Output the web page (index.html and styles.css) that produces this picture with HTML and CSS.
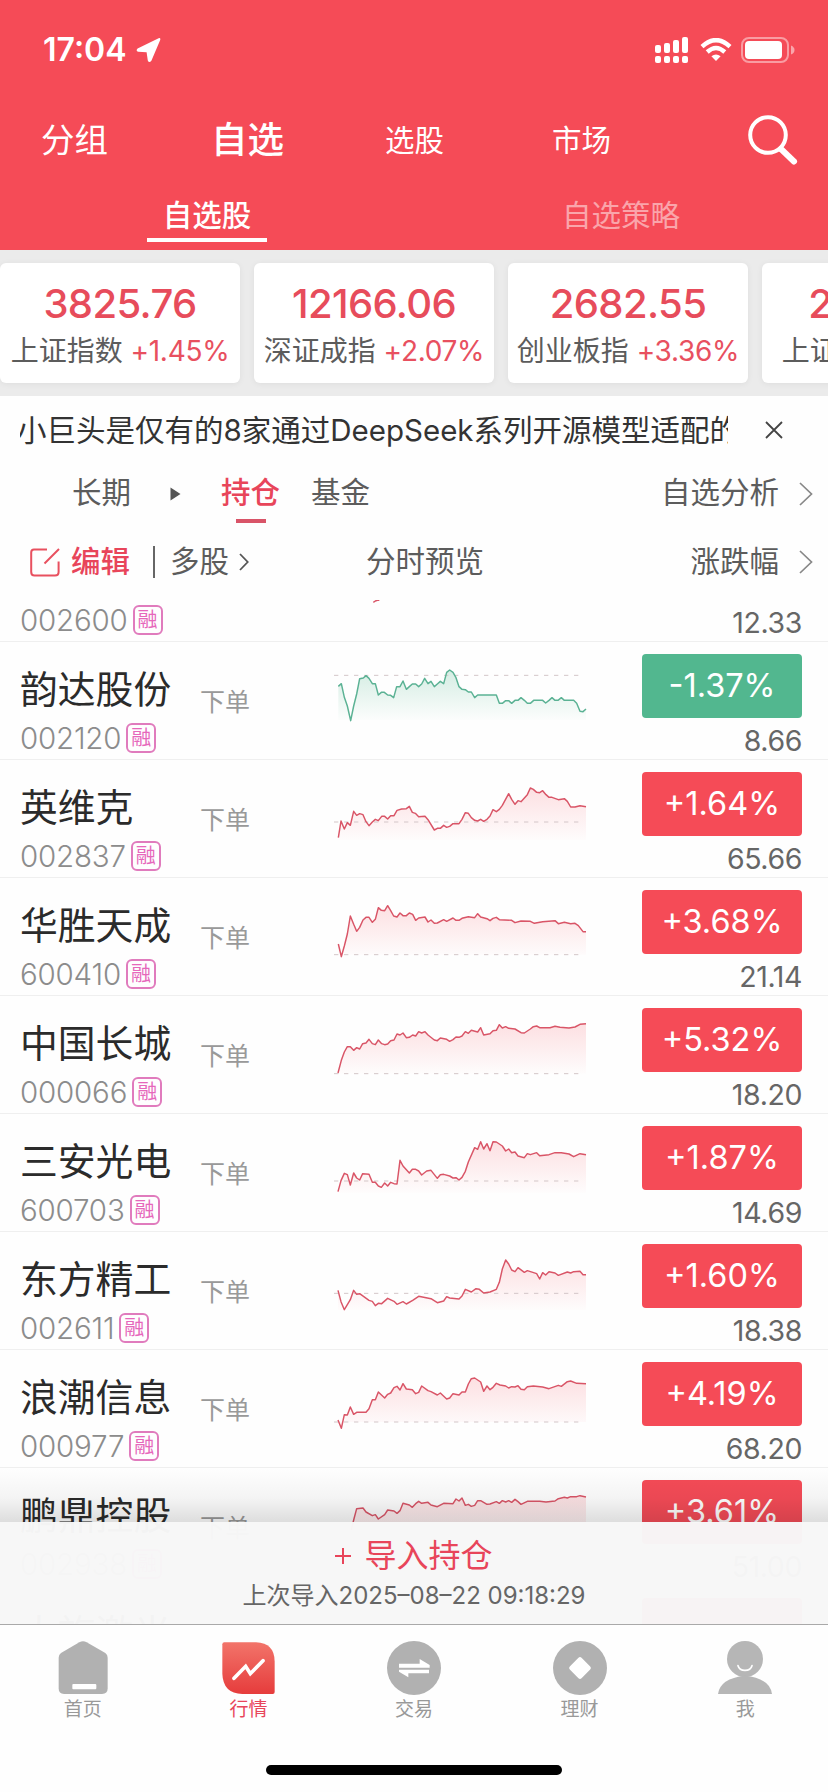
FILE: index.html
```html
<!DOCTYPE html>
<html lang="zh-CN">
<head>
    <meta charset="UTF-8">
    <title>自选股</title>
    <link rel="stylesheet" href="styles.css">
</head>
<body>
    <svg class="defs" width="0" height="0">
        <defs>
            <linearGradient id="upFill" x1="0" y1="0" x2="0" y2="1">
                <stop offset="0" stop-color="#f54b57" stop-opacity="0.17"/>
                <stop offset="1" stop-color="#f54b57" stop-opacity="0.01"/>
            </linearGradient>
            <linearGradient id="downFill" x1="0" y1="0" x2="0" y2="1">
                <stop offset="0" stop-color="#52b78f" stop-opacity="0.24"/>
                <stop offset="1" stop-color="#52b78f" stop-opacity="0.01"/>
            </linearGradient>
            <linearGradient id="tabFill" x1="0" y1="0" x2="0" y2="1">
                <stop offset="0" stop-color="#f2746a"/>
                <stop offset="1" stop-color="#e63c3c"/>
            </linearGradient>
        </defs>
    </svg>

    <header class="header">
        <div class="status-bar">
            <span class="time">17:04</span>
            <svg class="location" width="25" height="26" viewBox="0 0 25 26"><path d="M22.6 1.2 L1.6 11.4 Q-0.6 13.6 2.2 14.8 L10.6 15.2 L11.8 23.4 Q13 26.6 15.4 23.8 L24.2 3 Q24.8 0.4 22.6 1.2 Z" fill="#fff"/></svg>
            <svg class="signal" width="34" height="27" viewBox="0 0 34 27" fill="#fff">
                <rect x="0" y="8" width="6" height="8" rx="2"/><rect x="9" y="6" width="6" height="10" rx="2"/><rect x="18" y="3" width="6" height="13" rx="2"/><rect x="27" y="0" width="6" height="16" rx="2"/>
                <rect x="0" y="19" width="6" height="7" rx="2"/><rect x="9" y="19" width="6" height="7" rx="2"/><rect x="18" y="19" width="6" height="7" rx="2"/><rect x="27" y="19" width="6" height="7" rx="2"/>
            </svg>
            <svg class="wifi" width="32" height="24" viewBox="0 0 32 24" fill="none" stroke="#fff" stroke-width="4.4">
                <path d="M2 8.6 Q16 -4.4 30 8.6"/>
                <path d="M7.2 14 Q16 6 24.8 14"/>
                <path d="M16 23 L11.4 18.2 Q16 14.6 20.6 18.2 Z" fill="#fff" stroke="none"/>
            </svg>
            <svg class="battery" width="54" height="26" viewBox="0 0 54 26">
                <rect x="1" y="1" width="46" height="24" rx="7" fill="none" stroke="#fff" stroke-opacity="0.45" stroke-width="2"/>
                <rect x="4" y="4" width="37" height="18" rx="4" fill="#fff"/>
                <path d="M50 8.5 Q53.5 10 53.5 13 Q53.5 16 50 17.5 Z" fill="#fff" fill-opacity="0.5"/>
            </svg>
        </div>
        <nav class="main-nav">
            <span class="nav-group">分组</span>
            <span class="nav-active">自选</span>
            <span class="nav-pick">选股</span>
            <span class="nav-market">市场</span>
            <svg class="search" width="50" height="50" viewBox="0 0 50 50" fill="none" stroke="#fff" stroke-linecap="round">
                <circle cx="20" cy="20" r="17.8" stroke-width="4"/>
                <path d="M33 34 L46 46.5" stroke-width="6"/>
            </svg>
        </nav>
        <div class="sub-nav">
            <span class="sub-tab sub-active">自选股</span>
            <span class="sub-tab">自选策略</span>
        </div>
    </header>

    <section class="indexes">
        <div class="index-card">
            <div class="index-value">3825.76</div>
            <div class="index-label">上证指数 <span>+1.45%</span></div>
        </div>
        <div class="index-card">
            <div class="index-value">12166.06</div>
            <div class="index-label">深证成指 <span>+2.07%</span></div>
        </div>
        <div class="index-card">
            <div class="index-value">2682.55</div>
            <div class="index-label">创业板指 <span>+3.36%</span></div>
        </div>
        <div class="index-card">
            <div class="index-value">2928.61</div>
            <div class="index-label">上证50 <span>+2.32%</span></div>
        </div>
    </section>

    <section class="news">
        <div class="news-clip"><span class="news-text">小巨头是仅有的8家通过DeepSeek系列开源模型适配的</span></div>
        <svg width="18" height="18" viewBox="0 0 18 18" stroke="#444" stroke-width="1.8"><path d="M1 1 L17 17 M17 1 L1 17"/></svg>
    </section>

    <section class="groups">
        <span class="group-long">长期</span>
        <svg class="triangle" width="11" height="14" viewBox="0 0 11 14"><path d="M0.5 0.5 L10.5 7 L0.5 13.5 Z" fill="#555"/></svg>
        <span class="group-active">持仓</span>
        <span class="group-fund">基金</span>
        <span class="group-analysis">自选分析</span>
        <svg class="chevron" width="14" height="24" viewBox="0 0 14 24" fill="none" stroke="#888" stroke-width="1.7"><path d="M1 1 L12.5 12 L1 23"/></svg>
    </section>

    <section class="columns">
        <svg class="edit-icon" width="30" height="29" viewBox="0 0 30 29" fill="none" stroke="#e8505f" stroke-width="2">
            <path d="M17 1.5 H4 Q1.2 1.5 1.2 4.5 V24 Q1.2 27.5 4.5 27.5 H25 Q28.6 27.5 28.6 24 V13.5"/>
            <path d="M14.5 15.5 L29 1"/>
        </svg>
        <span class="edit">编辑</span>
        <i class="divider"></i>
        <span class="multi">多股</span>
        <svg class="chevron-small" width="10" height="18" viewBox="0 0 10 18" fill="none" stroke="#555" stroke-width="1.8"><path d="M1 1 L8.7 9 L1 17"/></svg>
        <span class="preview">分时预览</span>
        <span class="change">涨跌幅</span>
        <svg class="chevron" width="14" height="24" viewBox="0 0 14 24" fill="none" stroke="#888" stroke-width="1.7"><path d="M1 1 L12.5 12 L1 23"/></svg>
    </section>

    <main class="list">
        <div class="rows">
            <div class="row">
                <div class="stock">
                    <div class="name">领益智造</div>
                    <div class="code">002600<span class="tag">融</span></div>
                </div>
                <div class="order">下单</div>
                <svg class="spark" viewBox="0 0 840 354"><path class="line up" d="M160 235 L166 231 L172 229 L178 229"/></svg>
                <div class="quote">
                    <div class="pct up">+2.15%</div>
                    <div class="price">12.33</div>
                </div>
            </div>

            <div class="row">
                <div class="stock">
                    <div class="name">韵达股份</div>
                    <div class="code">002120<span class="tag">融</span></div>
                </div>
                <div class="order">下单</div>
                <svg class="spark" viewBox="0 6 840 354">
                    <path class="base" d="M42 106 H776"/>
                    <path class="line down" data-floor="240" d="M55 139 L64 131 L73 172 L82 198 L92 242 L101 198 L110 162 L119 116 L130 114 L138 107 L147 115 L157 131 L166 131 L175 165 L184 157 L193 157 L203 165 L212 166 L221 173 L230 140 L240 140 L249 123 L259 148 L268 140 L277 132 L287 132 L296 140 L305 132 L314 115 L324 131 L333 124 L343 140 L352 132 L361 124 L371 131 L380 97 L389 90 L399 97 L408 113 L417 140 L426 148 L436 149 L445 156 L454 156 L464 173 L473 165 H529 L538 190 L547 190 L557 182 L566 182 L575 190 L585 181 L594 181 L603 173 L613 181 L622 190 L631 190 L641 181 H668 L677 189 L687 181 L696 173 L705 181 L714 181 L724 173 L733 181 H761 L770 190 L780 214 L789 215 L798 207"/>
                </svg>
                <div class="quote">
                    <div class="pct down">-1.37%</div>
                    <div class="price">8.66</div>
                </div>
            </div>

            <div class="row">
                <div class="stock">
                    <div class="name">英维克</div>
                    <div class="code">002837<span class="tag">融</span></div>
                </div>
                <div class="order">下单</div>
                <svg class="spark" viewBox="0 360 840 354">
                    <path class="base" d="M42 546 H776"/>
                    <path class="line up" data-floor="600" d="M55 593 L63 543 L73 567 L82 548 L91 556 L101 514 L110 526 L119 521 L129 524 L138 545 L147 557 L157 546 L166 538 L175 542 L185 529 L194 529 L203 537 L212 527 L222 527 L231 511 L245 507 L259 506 L268 499 L277 517 L286 520 L296 530 L315 529 L324 539 L343 570 L352 565 L361 565 L371 556 L380 562 L389 559 L399 551 L417 551 L426 538 L436 518 L445 520 L454 533 L464 541 L473 543 L482 538 L491 544 L501 538 L510 528 L519 509 L529 515 L538 508 L547 496 L566 461 L575 478 L585 493 L594 482 L603 485 L622 464 L631 444 L640 448 L650 457 L659 458 L668 452 L678 464 L687 472 L696 472 L715 479 L733 476 L742 484 L752 501 L765 501 L780 497 L798 500"/>
                </svg>
                <div class="quote">
                    <div class="pct up">+1.64%</div>
                    <div class="price">65.66</div>
                </div>
            </div>

            <div class="row">
                <div class="stock">
                    <div class="name">华胜天成</div>
                    <div class="code">600410<span class="tag">融</span></div>
                </div>
                <div class="order">下单</div>
                <svg class="spark" viewBox="0 24 840 354">
                    <path class="base" d="M42 254 H776"/>
                    <path class="line up" data-floor="254" d="M55 222 L64 260 L73 228 L82 192 L91 138 L101 163 L110 184 L119 172 L129 150 L138 142 L147 142 L157 157 L166 148 L175 113 L184 121 L194 122 L203 107 L212 122 L221 138 L231 141 L240 129 L249 137 L259 137 L268 129 L278 133 L287 151 L296 144 L315 141 L324 156 L333 150 L343 160 L352 159 L371 149 L380 154 L399 144 L408 151 L417 151 L426 145 L445 140 L464 143 L473 131 L482 141 L501 146 L510 152 L519 145 L529 142 L538 149 L575 151 L585 158 L603 153 L631 154 L643 160 L668 155 L705 152 L715 161 L733 157 L752 161 L765 160 L775 167 L789 185 L798 185"/>
                </svg>
                <div class="quote">
                    <div class="pct up">+3.68%</div>
                    <div class="price">21.14</div>
                </div>
            </div>

            <div class="row">
                <div class="stock">
                    <div class="name">中国长城</div>
                    <div class="code">000066<span class="tag">融</span></div>
                </div>
                <div class="order">下单</div>
                <svg class="spark" viewBox="0 378 840 354">
                    <path class="base" d="M42 611 H776"/>
                    <path class="line up" data-floor="611" d="M54 609 L64 571 L73 546 L82 530 L91 530 L101 541 L110 533 L119 537 L128 521 L138 519 L147 508 L157 521 L166 524 L175 510 L185 521 L194 524 L203 522 L212 512 L222 510 L231 492 L240 495 L249 489 L259 503 L268 502 L278 495 L287 498 L296 485 L305 489 L315 485 L324 495 L343 510 L352 512 L361 504 L380 508 L389 514 L399 509 L408 501 L417 502 L426 498 L436 485 L445 490 L454 481 L473 486 L482 473 L491 495 L510 491 L519 482 L529 481 L538 464 L547 474 L557 470 L566 475 L585 477 L603 488 L613 489 L631 477 L640 470 L650 468 L659 473 L690 473 L705 469 L720 472 L747 474 L765 471 L780 463 L798 461"/>
                </svg>
                <div class="quote">
                    <div class="pct up">+5.32%</div>
                    <div class="price">18.20</div>
                </div>
            </div>

            <div class="row">
                <div class="stock">
                    <div class="name">三安光电</div>
                    <div class="code">600703<span class="tag">融</span></div>
                </div>
                <div class="order">下单</div>
                <svg class="spark" viewBox="0 12 840 354">
                    <path class="base" d="M42 213 H776"/>
                    <path class="line up" data-floor="248" d="M54 245 L63 212 L73 190 L82 194 L91 225 L101 189 L110 204 L119 210 L128 191 L147 193 L157 217 L166 217 L175 228 L184 232 L194 219 L203 228 L212 217 L222 221 L231 222 L240 151 L249 168 L268 189 L277 178 L287 178 L296 183 L305 195 L320 183 L333 181 L352 205 L361 194 L371 193 L389 198 L399 204 L408 203 L417 210 L426 202 L436 184 L445 156 L464 113 L473 118 L482 95 L491 117 L501 101 L510 122 L519 95 L529 96 L547 108 L557 123 L566 117 L575 128 L585 126 L594 138 L613 143 L622 131 L631 134 L650 128 L659 137 L687 134 L705 128 L724 128 L747 132 L761 140 L780 131 L798 134"/>
                </svg>
                <div class="quote">
                    <div class="pct up">+1.87%</div>
                    <div class="price">14.69</div>
                </div>
            </div>

            <div class="row">
                <div class="stock">
                    <div class="name">东方精工</div>
                    <div class="code">002611<span class="tag">融</span></div>
                </div>
                <div class="order">下单</div>
                <svg class="spark" viewBox="0 366 840 354">
                    <path class="base" d="M42 550 H776"/>
                    <path class="line up" data-floor="600" d="M54 541 L63 575 L73 599 L91 569 L101 541 L110 553 L119 551 L147 571 L157 574 L166 587 L175 580 L185 581 L203 565 L222 574 L231 583 L249 575 L259 582 L278 571 L296 559 L333 566 L352 578 L371 573 L380 560 L389 564 L417 567 L426 558 L436 538 L454 546 L468 536 L478 538 L491 549 L510 546 L529 538 L538 517 L547 477 L557 450 L566 462 L575 480 L585 485 L594 473 L613 487 L622 482 L650 491 L659 507 L668 488 L677 495 L687 485 L705 489 L715 496 L742 486 L752 489 L761 485 L780 484 L789 494 L798 494"/>
                </svg>
                <div class="quote">
                    <div class="pct up">+1.60%</div>
                    <div class="price">18.38</div>
                </div>
            </div>

            <div class="row">
                <div class="stock">
                    <div class="name">浪潮信息</div>
                    <div class="code">000977<span class="tag">融</span></div>
                </div>
                <div class="order">下单</div>
                <svg class="spark" viewBox="0 30 840 354">
                    <path class="base" d="M42 246 H776"/>
                    <path class="line up" data-floor="246" d="M54 240 L64 265 L73 224 L82 225 L91 201 L101 223 L110 217 L138 217 L147 206 L157 179 L166 179 L175 156 L194 174 L203 163 L212 159 L222 143 L231 139 L240 150 L249 131 L259 147 L277 149 L287 161 L296 157 L305 138 L324 152 L333 155 L352 165 L361 159 L380 177 L389 174 L399 161 L417 165 L426 156 L436 156 L445 132 L454 116 L464 114 L482 126 L491 154 L501 138 L510 149 L519 142 L529 130 L540 135 L557 138 L566 144 L575 140 L585 141 L594 137 L603 148 L613 149 L622 140 L640 138 L668 141 L687 146 L715 136 L724 139 L742 125 L752 123 L770 130 L798 131"/>
                </svg>
                <div class="quote">
                    <div class="pct up">+4.19%</div>
                    <div class="price">68.20</div>
                </div>
            </div>

            <div class="row">
                <div class="stock">
                    <div class="name">鹏鼎控股</div>
                    <div class="code">002938<span class="tag">融</span></div>
                </div>
                <div class="order">下单</div>
                <svg class="spark" viewBox="0 384 840 354">
                    <path class="line up" data-floor="600" d="M94 570 L101 540 L110 506 L129 504 L138 516 L157 527 L166 524 L175 537 L194 524 L203 510 L222 513 L231 520 L240 512 L249 490 L268 495 L277 502 L287 491 L296 484 L305 490 L324 487 L333 495 L352 500 L371 490 L399 491 L408 477 L417 483 L426 474 L436 496 L445 493 L454 499 L464 496 L473 482 L482 482 L501 493 L510 492 L529 485 L538 490 L547 482 L557 486 L566 482 L575 487 L585 478 L594 485 L603 493 L622 484 L659 484 L678 486 L705 483 L715 476 L733 472 L742 474 L752 470 L770 470 L780 467 L798 471"/>
                </svg>
                <div class="quote">
                    <div class="pct up">+3.61%</div>
                    <div class="price">51.00</div>
                </div>
            </div>

            <div class="row">
                <div class="stock">
                    <div class="name">大族激光</div>
                </div>
                <div></div>
                <svg class="spark" viewBox="0 0 840 354"></svg>
                <div class="quote">
                    <div class="pct up"></div>
                </div>
            </div>
        </div>

        <div class="import">
            <div class="import-action"><svg width="16" height="16" viewBox="0 0 16 16" stroke="#e8455a" stroke-width="2"><path d="M0 8 H16 M8 0 V16"/></svg>导入持仓</div>
            <div class="import-time">上次导入2025–08–22 09:18:29</div>
        </div>
    </main>

    <footer class="tab-bar">
        <div class="tab">
            <svg width="54" height="54" viewBox="0 0 162 162">
                <path d="M70 4 Q81 -2 92 4 L148 36 Q155 41 155 50 V142 Q155 159 138 159 H24 Q8 159 8 142 V50 Q8 41 15 36 Z" fill="#b1b1b1"/>
                <rect x="49" y="129" width="72" height="16" rx="3" fill="#fff"/>
            </svg>
            <span>首页</span>
        </div>
        <div class="tab tab-active">
            <svg width="54" height="54" viewBox="0 0 162 162">
                <path d="M10 4 H105 Q161 6 161 62 V153 Q161 159 155 159 H64 Q6 157 4 98 V10 Q4 4 10 4 Z" fill="url(#tabFill)"/>
                <path d="M39 112 L74 76 L88 98 L126 59" fill="none" stroke="#fff" stroke-width="11" stroke-linecap="round"/>
            </svg>
            <span>行情</span>
        </div>
        <div class="tab">
            <svg width="54" height="54" viewBox="0 0 162 162">
                <circle cx="81" cy="81" r="81" fill="#b1b1b1"/>
                <path d="M36 68 H98 V54 L128 72 V80 H36 Z M126 86 H36 V92 L64 109 V97 H126 Z" fill="#fff"/>
            </svg>
            <span>交易</span>
        </div>
        <div class="tab">
            <svg width="54" height="54" viewBox="0 0 162 162">
                <circle cx="81" cy="81" r="81" fill="#b1b1b1"/>
                <path d="M81 55 L107 81 L81 107 L55 81 Z" fill="#fff" stroke="#fff" stroke-width="13" stroke-linejoin="round"/>
            </svg>
            <span>理财</span>
        </div>
        <div class="tab">
            <svg width="54" height="54" viewBox="0 0 162 162">
                <circle cx="81" cy="54" r="54" fill="#b6b6b6"/>
                <path d="M0 159 Q6 112 81 104 Q156 112 162 159 Z" fill="#b6b6b6"/>
                <path d="M60 74 Q64 88 81 88 Q98 88 102 74" fill="none" stroke="#fff" stroke-width="5" stroke-linecap="round"/>
            </svg>
            <span>我</span>
        </div>
    </footer>
    <div class="home-indicator"></div>

    <script>
        // shade the area between each price line and its floor
        document.querySelectorAll('.line[data-floor]').forEach(line => {
            const d = line.getAttribute('d');
            const startX = d.slice(1).split(' ')[0];
            const area = document.createElementNS('http://www.w3.org/2000/svg', 'path');
            area.setAttribute('d', `${d} V${line.dataset.floor} H${startX} Z`);
            area.setAttribute('fill', line.classList.contains('up') ? 'url(#upFill)' : 'url(#downFill)');
            line.parentNode.prepend(area);
        });
    </script>
</body>
</html>
```

FILE: styles.css
```css
* {
    box-sizing: border-box;
}
body {
    margin: 0;
    width: 828px;
    height: 1792px;
    overflow: hidden;
    display: flex;
    flex-direction: column;
    background-color: #fefefe;
    color: #5c5c5c;
    font-family: Inter, "Noto Sans CJK SC", sans-serif;
    font-size: 29.5px;
    white-space: nowrap;
}
svg {
    display: block;
    flex: none;
}
.defs {
    position: absolute;
}

/* header */
.header {
    height: 250px;
    background-color: #f54b57;
    color: #fff;
}
.status-bar {
    display: flex;
    align-items: center;
    height: 100px;
    padding: 0 33px 0 43px;
}
.time {
    width: 93px;
    font-size: 32px;
    font-weight: 600;
    line-height: 40px;
}
.signal {
    margin-left: auto;
}
.wifi {
    margin: 0 9px 0 11px;
}
.main-nav {
    display: flex;
    align-items: center;
    height: 80px;
    padding: 0 30px 0 41px;
    line-height: 50px;
}
.nav-group {
    width: 170px;
    font-size: 33.5px;
}
.nav-active {
    width: 174px;
    font-size: 36.5px;
    font-weight: 500;
}
.nav-pick {
    width: 167px;
}
.search {
    margin-left: auto;
}
.sub-nav {
    display: grid;
    grid-template-columns: 1fr 1fr;
    justify-items: center;
    height: 70px;
    padding-top: 11px;
}
.sub-tab {
    height: 51px;
    line-height: 48px;
    color: rgba(255, 255, 255, 0.5);
}
.sub-active {
    width: 120px;
    text-align: center;
    font-weight: 500;
    color: #fff;
    border-bottom: 4px solid #fff;
}

/* index cards */
.indexes {
    display: flex;
    gap: 14px;
    height: 146px;
    padding-top: 13px;
    background-color: #ebebeb;
    overflow: hidden;
}
.index-card {
    flex: none;
    width: 240px;
    height: 120px;
    padding-top: 16px;
    text-align: center;
    background-color: #fff;
    border-radius: 6px;
    box-shadow: 0 1px 6px rgba(0, 0, 0, 0.06);
}
.index-value {
    font-size: 40px;
    font-weight: 500;
    letter-spacing: -0.6px;
    line-height: 50px;
    color: #e74c5b;
}
.index-label {
    font-size: 28px;
    line-height: 44px;
}
.index-label span {
    letter-spacing: -0.3px;
    color: #e8505f;
}

/* scrolling notice */
.news {
    display: flex;
    align-items: center;
    justify-content: space-between;
    height: 68px;
    padding: 0 45px 0 20px;
    color: #333;
}
.news-clip {
    width: 708px;
    overflow: hidden;
}
.news-text {
    margin-left: -3px;
    line-height: 46px;
}

/* groups */
.groups {
    display: flex;
    align-items: center;
    height: 60px;
    padding: 0 15px 0 72px;
    line-height: 56px;
}
.groups > span {
    height: 60px;
}
.group-long {
    width: 98px;
}
.triangle {
    margin-right: 40px;
}
.group-active {
    display: flex;
    flex-direction: column;
    align-items: center;
    margin-right: 31px;
    font-weight: 500;
    color: #e8455a;
}
.group-active::after {
    content: "";
    width: 30px;
    height: 4px;
    margin-top: -1px;
    background-color: #d95468;
}
.group-analysis {
    margin-left: auto;
}
.chevron {
    margin-left: 20px;
}

/* column heads */
.columns {
    display: flex;
    align-items: center;
    height: 76px;
    padding: 0 15px 0 30px;
    line-height: 42px;
}
.columns > span {
    padding-bottom: 2px;
}
.edit {
    margin-left: 11px;
    font-weight: 500;
    color: #e8455a;
}
.divider {
    width: 2px;
    height: 32px;
    margin: 0 15px 0 23px;
    background-color: #666;
}
.chevron-small {
    margin-left: 10px;
}
.preview {
    margin-left: 117px;
}
.change {
    margin-left: auto;
}

/* stock list */
.list {
    position: relative;
    height: 1025px;
    overflow: hidden;
}
.rows {
    margin-top: -76px;
}
.row {
    display: grid;
    grid-template-columns: 180px 120px 280px 202px;
    height: 118px;
    padding-left: 20px;
    border-bottom: 1px solid #efefef;
}
.stock {
    padding-top: 22px;
}
.name {
    font-size: 37.8px;
    line-height: 50px;
    color: #2b2b2b;
}
.code {
    display: flex;
    align-items: center;
    gap: 5px;
    height: 30px;
    margin-top: 9px;
    font-size: 29.5px;
    font-weight: 300;
    letter-spacing: -0.2px;
    color: #8c8c8c;
}
.tag {
    width: 30px;
    height: 30px;
    border: 2px solid #e07bbd;
    border-radius: 6px;
    font-size: 20px;
    font-weight: 400;
    letter-spacing: 0;
    line-height: 27px;
    display: flex;
    justify-content: center;
    color: #e667bb;
}
.order {
    padding-top: 42px;
    font-size: 25px;
    line-height: 36px;
    color: #999;
}
.spark {
    width: 280px;
    height: 118px;
}
.line {
    fill: none;
    stroke-width: 4.4;
    stroke-linejoin: round;
}
.line.up {
    stroke: #d95567;
}
.line.down {
    stroke: #5bb294;
}
.base {
    fill: none;
    stroke: #d3c6c8;
    stroke-width: 3;
    stroke-dasharray: 13 17;
}
.quote {
    padding-top: 12px;
    text-align: right;
}
.pct {
    width: 160px;
    height: 64px;
    margin-left: auto;
    border-radius: 4px;
    font-size: 32.5px;
    line-height: 64px;
    text-align: center;
    color: #fff;
}
.pct.up {
    background-color: #f54b57;
}
.pct.down {
    background-color: #52b78f;
}
.price {
    margin-top: 5px;
    font-size: 28.5px;
    letter-spacing: -0.4px;
    line-height: 36px;
    color: #666;
}

/* import panel */
.import {
    position: absolute;
    left: 0;
    right: 0;
    bottom: 0;
    height: 103px;
    padding-top: 12px;
    text-align: center;
    background-color: rgba(247, 247, 247, 0.98);
    border-bottom: 1px solid #a9a9a9;
}
.import::before {
    content: "";
    position: absolute;
    left: 0;
    right: 0;
    bottom: 100%;
    height: 54px;
    background-image: linear-gradient(rgba(0, 0, 0, 0), rgba(0, 0, 0, 0.04) 55%, rgba(0, 0, 0, 0.13));
}
.import-action {
    display: flex;
    align-items: center;
    justify-content: center;
    gap: 13px;
    font-size: 32px;
    line-height: 44px;
    color: #e8455a;
}
.import-time {
    margin-top: 1px;
    font-size: 24px;
    line-height: 34px;
    color: #666;
}

/* bottom tabs */
.tab-bar {
    display: grid;
    grid-template-columns: repeat(5, 1fr);
    height: 140px;
    padding-top: 16px;
}
.tab {
    display: flex;
    flex-direction: column;
    align-items: center;
    font-size: 19px;
    line-height: 30px;
    color: #999;
}
.tab-active {
    color: #e8455a;
}
.home-indicator {
    width: 296px;
    height: 10px;
    margin: 0 auto;
    border-radius: 5px;
    background-color: #000;
}
```
